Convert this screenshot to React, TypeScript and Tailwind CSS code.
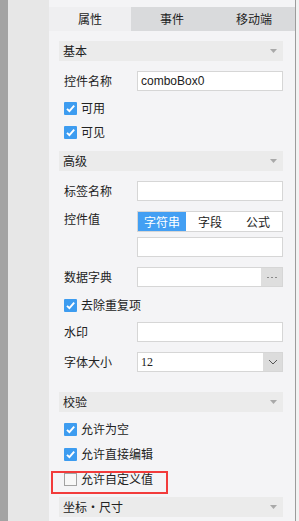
import React from "react";

const cjk = { fontFamily: '"Noto Sans CJK SC", "Noto Sans", sans-serif' };

function Header({ title, className = "" }: { title: string; className?: string }) {
  return (
    <div className={`flex items-center justify-between h-[20px] bg-[#ebebeb] pl-[4px] pr-[6px] ${className}`}>
      <span className="text-[12px] leading-none text-[#222]">{title}</span>
      <svg width="7" height="4" viewBox="0 0 7 4">
        <path d="M0 0 H7 L3.5 4 Z" fill="#a9a9a9" />
      </svg>
    </div>
  );
}

function Check({ checked }: { checked: boolean }) {
  if (!checked)
    return <div className="w-[13px] h-[13px] border border-[#a2a2a2] bg-[#f7f7f7]" />;
  return (
    <div className="w-[13px] h-[13px] bg-[#3d9cf0] rounded-[1px] flex items-center justify-center">
      <svg width="11" height="11" viewBox="0 0 11 11">
        <path d="M2 5.8 L4.4 8.2 L9.2 2.6" stroke="#fff" strokeWidth="1.9" fill="none" />
      </svg>
    </div>
  );
}

function CheckRow({ label, checked, className = "" }: any) {
  return (
    <div className={`flex items-center h-[20px] pl-[5px] gap-[4px] ${className}`}>
      <Check checked={checked} />
      <span className="text-[12px] leading-none text-[#222]">{label}</span>
    </div>
  );
}

function Label({ text }: { text: string }) {
  return <span className="w-[73px] shrink-0 text-[12px] leading-none text-[#222]">{text}</span>;
}

function Input({ value = "", serif = false }: { value?: string; serif?: boolean }) {
  return (
    <div
      className="flex-1 h-[20px] bg-white border border-[#d6d6d6] flex items-center px-[3px] text-[12px] text-[#222]"
      style={{ fontFamily: serif ? '"Liberation Serif", serif' : '"Liberation Sans", sans-serif' }}
    >
      {value}
    </div>
  );
}

function FieldRow({ label, children, className = "" }: any) {
  return (
    <div className={`flex items-center h-[20px] pl-[5px] ${className}`}>
      <Label text={label} />
      {children}
    </div>
  );
}

export default function App() {
  return (
    <div className="flex w-[299px] h-[521px] overflow-hidden" style={cjk}>
      <div className="w-[8px] bg-[#a3a3a3]" />
      <div className="w-[41px] bg-[#e7e7e7]" />
      <div className="w-[246px] bg-[#f4f4f6] flex flex-col">
        <div className="h-[7px]" />
        <div className="flex h-[24px] text-[12px] text-[#222]">
          <div className="flex-1 bg-[#efeff1] flex items-center justify-center">属性</div>
          <div className="flex-1 bg-[#d9dadc] flex items-center justify-center">事件</div>
          <div className="flex-1 bg-[#d9dadc] flex items-center justify-center">移动端</div>
        </div>

        <div className="pl-[10px] pr-[12px] flex flex-col">
          <Header title="基本" className="mt-[10px]" />
          <FieldRow label="控件名称" className="mt-[10px]">
            <Input value="comboBox0" />
          </FieldRow>
          <CheckRow label="可用" checked className="mt-[7px]" />
          <CheckRow label="可见" checked className="mt-[4px]" />

          <Header title="高级" className="mt-[9px]" />
          <FieldRow label="标签名称" className="mt-[10px]">
            <Input />
          </FieldRow>
          <div className="flex items-center h-[21px] pl-[5px] mt-[10px]">
            <span className="w-[73px] shrink-0 text-[12px] leading-none text-[#222] -mt-[6px]">控件值</span>
            <div className="flex-1 h-[21px] flex border border-[#d6d6d6] bg-white text-[12px]">
              <div className="w-[48px] bg-[#439ff3] text-white flex items-center justify-center">字符串</div>
              <div className="flex-1 flex items-center justify-center text-[#222]">字段</div>
              <div className="flex-1 flex items-center justify-center text-[#222]">公式</div>
            </div>
          </div>
          <div className="flex h-[20px] pl-[78px] mt-[5px]">
            <Input />
          </div>
          <FieldRow label="数据字典" className="mt-[10px]">
            <div className="flex-1 h-[20px] flex border border-[#d6d6d6] bg-white">
              <div className="flex-1" />
              <div className="w-[21px] bg-[#dedede] flex items-center justify-center gap-[2px]">
                <span className="w-[2px] h-[1px] bg-[#8a8a8a]" />
                <span className="w-[2px] h-[1px] bg-[#8a8a8a]" />
                <span className="w-[2px] h-[1px] bg-[#8a8a8a]" />
              </div>
            </div>
          </FieldRow>
          <CheckRow label="去除重复项" checked className="mt-[8px]" />
          <FieldRow label="水印" className="mt-[7px]">
            <Input />
          </FieldRow>
          <FieldRow label="字体大小" className="mt-[10px]">
            <div className="flex-1 h-[20px] flex border border-[#d6d6d6] bg-white">
              <div
                className="flex-1 flex items-center px-[3px] text-[12px] text-[#222]"
                style={{ fontFamily: '"Liberation Serif", serif' }}
              >
                12
              </div>
              <div className="w-[19px] bg-[#dcdcdc] flex items-center justify-center">
                <svg width="10" height="6" viewBox="0 0 10 6">
                  <path d="M1 1 L5 5 L9 1" stroke="#555" strokeWidth="1" fill="none" />
                </svg>
              </div>
            </div>
          </FieldRow>

          <Header title="校验" className="mt-[20px]" />
          <CheckRow label="允许为空" checked className="mt-[7px]" />
          <CheckRow label="允许直接编辑" checked className="mt-[5px]" />
          <div className="relative mt-[5px]">
            <CheckRow label="允许自定义值" checked={false} />
            <div className="absolute left-[-8px] top-[2px] w-[117px] h-[23px] border-2 border-[#f23b3b]" />
          </div>
          <Header title="坐标・尺寸" className="mt-[8px]" />
        </div>
      </div>
      <div className="w-[1px] bg-[#9c9c9c]" />
      <div className="flex-1 bg-[#f2f2f2]" />
    </div>
  );
}
